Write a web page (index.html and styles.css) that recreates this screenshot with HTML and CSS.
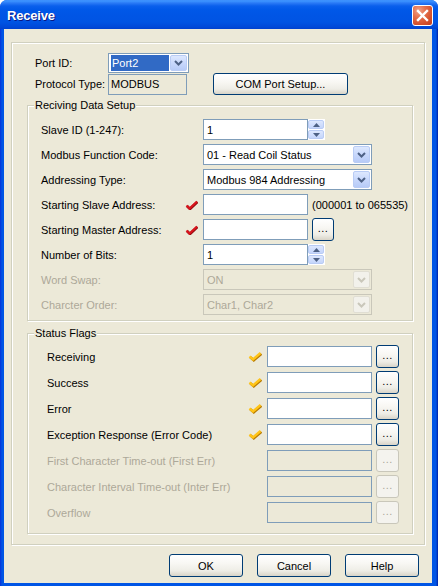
FILE: index.html
```html
<!DOCTYPE html>
<html>
<head>
<meta charset="utf-8">
<link rel="stylesheet" href="styles.css">
</head>
<body>
<div class="window">
  <div class="titlebar">
    <span class="title">Receive</span>
    <div class="close"><svg width="13" height="13" viewBox="0 0 13 13"><path d="M2 2 L11 11 M11 2 L2 11" stroke="#fff" stroke-width="2.4" stroke-linecap="square"/></svg></div>
  </div>
  <div class="client">
    <div class="frame">
      <div class="toprow r1">
        <span class="tlbl">Port ID:</span>
        <div class="combo c-port"><span class="val"><span class="sel">Port2</span></span><span class="dd"><svg width="9" height="6" viewBox="0 0 9 6"><path d="M1 1 L4.5 4.5 L8 1" fill="none" stroke="#4D6185" stroke-width="2"/></svg></span></div>
      </div>
      <div class="toprow r2">
        <span class="tlbl">Protocol Type:</span>
        <div class="ro">MODBUS</div>
        <div class="btn com">COM Port Setup...</div>
      </div>

      <div class="group g-recv">
        <span class="legend">Reciving Data Setup</span>
        <div class="row">
          <span class="lbl">Slave ID (1-247):</span><span class="mark"></span>
          <div class="edit">1</div>
          <div class="spin"><span class="sb"><svg width="7" height="4" viewBox="0 0 7 4"><path d="M0 4 L3.5 0 L7 4Z" fill="#4D6185"/></svg></span><span class="sb"><svg width="7" height="4" viewBox="0 0 7 4"><path d="M0 0 L3.5 4 L7 0Z" fill="#4D6185"/></svg></span></div>
        </div>
        <div class="row">
          <span class="lbl">Modbus Function Code:</span><span class="mark"></span>
          <div class="combo c-wide"><span class="val">01 - Read Coil Status</span><span class="dd"><svg width="9" height="6" viewBox="0 0 9 6"><path d="M1 1 L4.5 4.5 L8 1" fill="none" stroke="#4D6185" stroke-width="2"/></svg></span></div>
        </div>
        <div class="row">
          <span class="lbl">Addressing Type:</span><span class="mark"></span>
          <div class="combo c-wide"><span class="val">Modbus 984 Addressing</span><span class="dd"><svg width="9" height="6" viewBox="0 0 9 6"><path d="M1 1 L4.5 4.5 L8 1" fill="none" stroke="#4D6185" stroke-width="2"/></svg></span></div>
        </div>
        <div class="row">
          <span class="lbl">Starting Slave Address:</span>
          <span class="mark"><svg width="13" height="10" viewBox="0 0 13 10"><path d="M1.5 5.5 L4.5 8.5 L12 1.5" fill="none" stroke="#8E0A10" stroke-width="2.6" transform="translate(0.5,0.5)"/><path d="M1.5 5.5 L4.5 8.5 L12 1.5" fill="none" stroke="#D8141C" stroke-width="2.2"/></svg></span>
          <div class="edit"></div>
          <span class="hint">(000001 to 065535)</span>
        </div>
        <div class="row">
          <span class="lbl">Starting Master Address:</span>
          <span class="mark"><svg width="13" height="10" viewBox="0 0 13 10"><path d="M1.5 5.5 L4.5 8.5 L12 1.5" fill="none" stroke="#8E0A10" stroke-width="2.6" transform="translate(0.5,0.5)"/><path d="M1.5 5.5 L4.5 8.5 L12 1.5" fill="none" stroke="#D8141C" stroke-width="2.2"/></svg></span>
          <div class="edit"></div>
          <div class="btn dots d-master">...</div>
        </div>
        <div class="row">
          <span class="lbl">Number of Bits:</span><span class="mark"></span>
          <div class="edit">1</div>
          <div class="spin"><span class="sb"><svg width="7" height="4" viewBox="0 0 7 4"><path d="M0 4 L3.5 0 L7 4Z" fill="#4D6185"/></svg></span><span class="sb"><svg width="7" height="4" viewBox="0 0 7 4"><path d="M0 0 L3.5 4 L7 0Z" fill="#4D6185"/></svg></span></div>
        </div>
        <div class="row">
          <span class="lbl dis">Word Swap:</span><span class="mark"></span>
          <div class="combo c-wide disabled"><span class="val">ON</span><span class="dd"><svg width="9" height="6" viewBox="0 0 9 6"><path d="M1 1 L4.5 4.5 L8 1" fill="none" stroke="#C9C7BA" stroke-width="2"/></svg></span></div>
        </div>
        <div class="row">
          <span class="lbl dis">Charcter Order:</span><span class="mark"></span>
          <div class="combo c-wide disabled"><span class="val">Char1, Char2</span><span class="dd"><svg width="9" height="6" viewBox="0 0 9 6"><path d="M1 1 L4.5 4.5 L8 1" fill="none" stroke="#C9C7BA" stroke-width="2"/></svg></span></div>
        </div>
      </div>

      <div class="group g-status">
        <span class="legend">Status Flags</span>
        <div class="srow">
          <span class="slbl">Receiving</span>
          <span class="smark"><svg width="14" height="11" viewBox="0 0 14 11"><path d="M1.5 5.5 L5 8.5 L12.5 2" fill="none" stroke="#B77A00" stroke-width="2.6" transform="translate(0.8,0.8)"/><path d="M1.5 5.5 L5 8.5 L12.5 2" fill="none" stroke="#FFC418" stroke-width="2.4"/></svg></span>
          <div class="edit"></div><div class="btn dots">...</div>
        </div>
        <div class="srow">
          <span class="slbl">Success</span>
          <span class="smark"><svg width="14" height="11" viewBox="0 0 14 11"><path d="M1.5 5.5 L5 8.5 L12.5 2" fill="none" stroke="#B77A00" stroke-width="2.6" transform="translate(0.8,0.8)"/><path d="M1.5 5.5 L5 8.5 L12.5 2" fill="none" stroke="#FFC418" stroke-width="2.4"/></svg></span>
          <div class="edit"></div><div class="btn dots">...</div>
        </div>
        <div class="srow">
          <span class="slbl">Error</span>
          <span class="smark"><svg width="14" height="11" viewBox="0 0 14 11"><path d="M1.5 5.5 L5 8.5 L12.5 2" fill="none" stroke="#B77A00" stroke-width="2.6" transform="translate(0.8,0.8)"/><path d="M1.5 5.5 L5 8.5 L12.5 2" fill="none" stroke="#FFC418" stroke-width="2.4"/></svg></span>
          <div class="edit"></div><div class="btn dots">...</div>
        </div>
        <div class="srow">
          <span class="slbl">Exception Response (Error Code)</span>
          <span class="smark"><svg width="14" height="11" viewBox="0 0 14 11"><path d="M1.5 5.5 L5 8.5 L12.5 2" fill="none" stroke="#B77A00" stroke-width="2.6" transform="translate(0.8,0.8)"/><path d="M1.5 5.5 L5 8.5 L12.5 2" fill="none" stroke="#FFC418" stroke-width="2.4"/></svg></span>
          <div class="edit"></div><div class="btn dots">...</div>
        </div>
        <div class="srow">
          <span class="slbl dis">First Character Time-out (First Err)</span><span class="smark"></span>
          <div class="edit edis"></div><div class="btn dots bdis">...</div>
        </div>
        <div class="srow">
          <span class="slbl dis">Character Interval Time-out (Inter Err)</span><span class="smark"></span>
          <div class="edit edis"></div><div class="btn dots bdis">...</div>
        </div>
        <div class="srow">
          <span class="slbl dis">Overflow</span><span class="smark"></span>
          <div class="edit edis"></div><div class="btn dots bdis">...</div>
        </div>
      </div>
    </div>
    <div class="buttons">
      <div class="btn pb">OK</div>
      <div class="btn pb">Cancel</div>
      <div class="btn pb">Help</div>
    </div>
  </div>
</div>
</body>
</html>
```

FILE: styles.css
```css
* { box-sizing: border-box; }
html, body { margin: 0; padding: 0; }
body {
  width: 438px;
  height: 586px;
  overflow: hidden;
  font-family: "Liberation Sans", Arial, sans-serif;
  font-size: 11px;
  color: #000;
  background: #fff;
}
.window {
  width: 438px;
  height: 586px;
  display: flex;
  flex-direction: column;
  background: linear-gradient(90deg, #0831D9 0, #0055E5 2px, #0055E5 436px, #001EA0 438px);
  border-radius: 7px 7px 0 0;
  overflow: hidden;
}
.titlebar {
  height: 29px;
  flex: none;
  display: flex;
  align-items: center;
  justify-content: space-between;
  padding: 0 5px 0 7px;
  background: linear-gradient(180deg, #3C8CFB 0, #3D95FF 1px, #2A7AF6 3px, #0A5FEC 6px, #0058E8 10px, #0055E5 16px, #0054E3 22px, #0049D8 27px, #0041CE 29px);
}
.title {
  color: #fff;
  font-weight: bold;
  font-size: 13px;
  letter-spacing: -0.2px;
  text-shadow: 1px 1px 0 #0A1883;
  margin-top: 1px;
}
.close {
  width: 21px;
  height: 21px;
  border: 1px solid #fff;
  border-radius: 3px;
  background: radial-gradient(circle at 30% 25%, #F0A38A 0, #E5704C 35%, #D4502C 70%, #C23D1D 100%);
  display: flex;
  align-items: center;
  justify-content: center;
  margin-top: 1px;
}
.client {
  flex: none;
  height: 554px;
  margin: 0 6px 0 4px;
  background: #ECE9D8;
  padding: 13px 7px 0 7px;
}
.frame {
  width: 414px;
  border: 1px solid #D0D0BF;
  box-shadow: inset 1px 1px 0 #fff, 1px 1px 0 #fff;
  padding: 10px 0 10px 0;
}
.toprow {
  display: flex;
  align-items: center;
}
.toprow.r1 { height: 20px; }
.toprow.r2 { height: 22px; }
.tlbl {
  width: 96px;
  padding-left: 23px;
  flex: none;
  white-space: nowrap;
}
.combo {
  height: 21px;
  border: 1px solid #7F9DB9;
  background: #fff;
  display: flex;
  align-items: stretch;
  padding: 1px;
  flex: none;
}
.combo .val {
  flex: 1;
  display: flex;
  align-items: center;
  padding-left: 2px;
  white-space: nowrap;
  overflow: hidden;
}
.combo .dd {
  width: 17px;
  flex: none;
  border: 1px solid #B9CCF5;
  border-radius: 2px;
  background: linear-gradient(180deg, #DDE8FE 0, #C8D8FC 50%, #B7CBF7 100%);
  display: flex;
  align-items: center;
  justify-content: center;
}
.c-port { width: 81px; height: 20px; }
.c-port .val { padding-left: 1px; }
.c-port .sel {
  background: #316AC5;
  color: #fff;
  height: 100%;
  width: 58px;
  display: flex;
  align-items: center;
  padding-left: 1px;
}
.c-wide { width: 169px; }
.combo.disabled {
  border-color: #C9C7BA;
  background: #ECE9D8;
  color: #ACA899;
}
.combo.disabled .dd {
  border-color: #E0DED3;
  background: #F2F1EB;
}
.ro {
  width: 79px;
  height: 21px;
  border: 1px solid #7F9DB9;
  display: flex;
  align-items: center;
  padding-left: 2px;
  flex: none;
}
.btn {
  border: 1px solid #003C74;
  border-radius: 3px;
  background: linear-gradient(180deg, #FFFFFF 0, #F8F7F3 40%, #EEEDE6 75%, #D8D4C8 100%);
  display: flex;
  align-items: center;
  justify-content: center;
  white-space: nowrap;
  flex: none;
}
.com {
  width: 135px;
  height: 22px;
  margin-left: 26px;
}
.group {
  position: relative;
  border: 1px solid #D0D0BF;
  box-shadow: inset 1px 1px 0 #fff, 1px 1px 0 #fff;
  margin-left: 15px;
  width: 386px;
}
.legend {
  position: absolute;
  top: -7px;
  left: 6px;
  padding: 0 1px;
  background: #ECE9D8;
  line-height: 13px;
}
.g-recv {
  margin-top: 10px;
  padding: 13px 0 5px 13px;
  display: flex;
  flex-direction: column;
  gap: 4px;
}
.row {
  height: 21px;
  display: flex;
  align-items: center;
}
.lbl {
  width: 144px;
  flex: none;
  white-space: nowrap;
}
.dis { color: #ACA899; }
.mark {
  width: 18px;
  flex: none;
  display: flex;
  align-items: center;
}
.edit {
  width: 105px;
  height: 21px;
  flex: none;
  border: 1px solid #7F9DB9;
  background: #fff;
  display: flex;
  align-items: center;
  padding-left: 3px;
}
.edis { background: #ECE9D8; }
.spin {
  width: 17px;
  height: 21px;
  flex: none;
  display: flex;
  flex-direction: column;
  gap: 1px;
  padding: 1px 1px 1px 0;
  background: #fff;
}
.sb {
  flex: 1;
  border: 1px solid #B9CCF5;
  border-radius: 2px;
  background: linear-gradient(180deg, #DDE8FE 0, #C4D5FB 100%);
  display: flex;
  align-items: center;
  justify-content: center;
}
.hint {
  margin-left: 4px;
  white-space: nowrap;
}
.dots {
  width: 23px;
  height: 23px;
  padding-bottom: 3px;
  letter-spacing: 0.5px;
}
.d-master { margin-left: 4px; width: 22px; }
.g-status {
  margin-top: 12px;
  padding: 12px 0 10px 19px;
  display: flex;
  flex-direction: column;
  gap: 5px;
}
.srow {
  height: 21px;
  display: flex;
  align-items: center;
}
.slbl {
  width: 201px;
  flex: none;
  white-space: nowrap;
}
.smark {
  width: 19px;
  flex: none;
  display: flex;
  align-items: center;
}
.srow .dots { margin-left: 4px; }
.bdis {
  border-color: #C9C7BA;
  background: #F4F3EE;
  color: #ACA899;
}
.buttons {
  display: flex;
  justify-content: flex-end;
  gap: 14px;
  margin-top: 9px;
  padding-right: 6px;
}
.pb {
  width: 74px;
  height: 23px;
}
```
